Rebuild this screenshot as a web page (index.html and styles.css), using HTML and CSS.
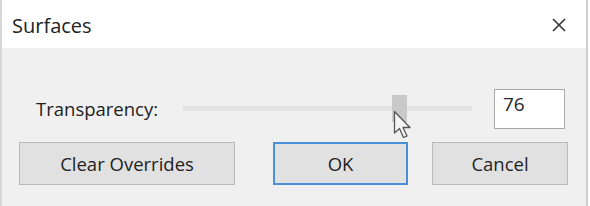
FILE: index.html
```html
<!DOCTYPE html>
<html>
<head>
<meta charset="utf-8">
<link rel="stylesheet" href="styles.css">
</head>
<body>
<div class="dialog">
  <div class="titlebar">
    <span class="title">Surfaces</span>
    <svg class="close" width="14" height="14" viewBox="0 0 14 14"><path d="M1 1 L13 13 M13 1 L1 13" stroke="#3a3a3a" stroke-width="1.7" fill="none"/></svg>
  </div>
  <div class="content">
    <div class="row">
      <span class="label">Transparency:</span>
      <div class="slider">
        <div class="track"></div>
        <div class="thumb" style="left: 209px"></div>
        <svg class="cursor" width="20" height="30" viewBox="0 0 20 30"><path d="M1.5 1.5 L1.5 23 L6.5 18.5 L10.5 27.5 L14 26 L10 17.5 L17 17.5 Z" fill="#f4f4f4" stroke="#555" stroke-width="1.3" stroke-linejoin="round"/></svg>
      </div>
      <div class="input">76</div>
    </div>
    <div class="buttons">
      <button class="btn clear">Clear Overrides</button>
      <button class="btn ok">OK</button>
      <button class="btn cancel">Cancel</button>
    </div>
  </div>
</div>
</body>
</html>
```
FILE: styles.css
```css
html, body {
  margin: 0;
  padding: 0;
  background: #ffffff;
}
body {
  width: 590px;
  height: 206px;
  overflow: hidden;
  font-family: "Open Sans", "Noto Sans", sans-serif;
  color: #222222;
}
.dialog {
  width: 584px;
  height: 206px;
  border-left: 2px solid #d6d6d6;
  border-right: 2px solid #cfcfcf;
  display: flex;
  flex-direction: column;
}
.titlebar {
  height: 48px;
  background: #ffffff;
  display: flex;
  align-items: center;
  justify-content: space-between;
  padding: 0 20px 0 10px;
  flex-shrink: 0;
}
.title {
  font-size: 20px;
  color: #222222;
  margin-top: 2px;
}
.close {
  display: block;
  margin-top: 2px;
}
.content {
  flex: 1;
  background: #f0f0f1;
  padding-top: 39px;
}
.row {
  display: flex;
  align-items: center;
  height: 44px;
}
.label {
  font-size: 18.5px;
  margin-left: 34px;
  width: 147px;
  margin-top: -1px;
}
.slider {
  position: relative;
  width: 289px;
  height: 44px;
  display: flex;
  align-items: center;
}
.track {
  width: 100%;
  height: 5px;
  background: #e3e3e4;
  margin-top: -2px;
}
.thumb {
  position: absolute;
  top: 8px;
  width: 15px;
  height: 27px;
  background: #c9c9ca;
}
.cursor {
  position: absolute;
  left: 210px;
  top: 23px;
}
.input {
  margin-left: 22px;
  width: 71px;
  height: 40px;
  box-sizing: border-box;
  border: 1px solid #a9a9a9;
  background: #ffffff;
  font-size: 19px;
  padding: 1px 0 0 8px;
  color: #262626;
}
.buttons {
  display: flex;
  margin-top: 11px;
  padding-left: 17px;
}
.btn {
  height: 43px;
  box-sizing: border-box;
  background: #e1e1e2;
  border: 1px solid #b9b9b9;
  font-family: "Open Sans", "Noto Sans", sans-serif;
  font-size: 18.5px;
  color: #222222;
  padding: 0;
}
.clear {
  width: 216px;
}
.ok {
  width: 135px;
  margin-left: 38px;
  border: 2px solid #4a90d9;
}
.cancel {
  width: 136px;
  margin-left: 24px;
}
```
